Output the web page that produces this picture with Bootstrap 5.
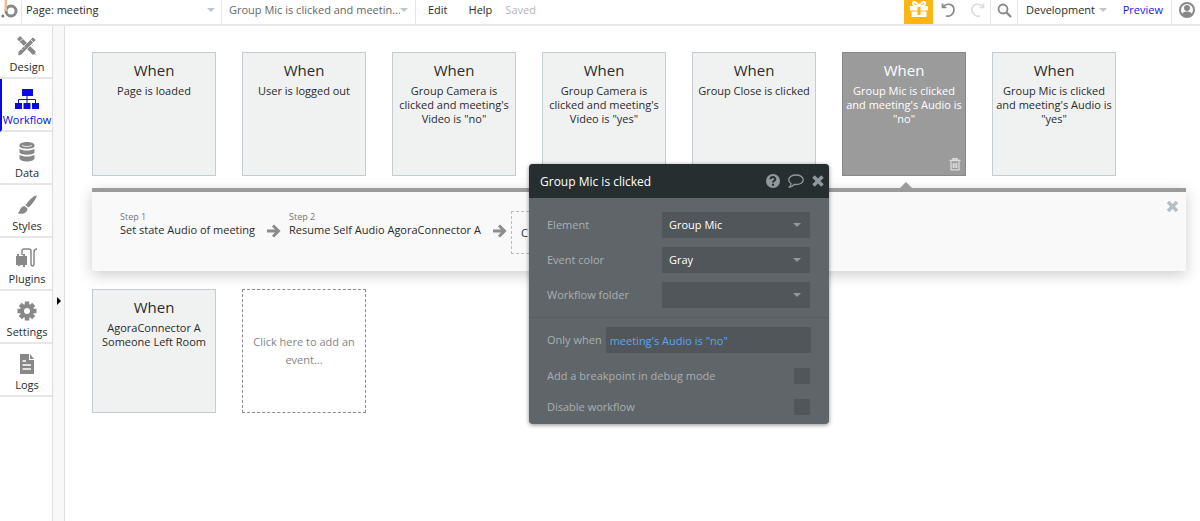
<!DOCTYPE html>
<html lang="en">
<head>
<meta charset="utf-8">
<meta name="viewport" content="width=device-width, initial-scale=1">
<title>Workflow editor</title>
<link href="https://cdn.jsdelivr.net/npm/bootstrap@5.3.0/dist/css/bootstrap.min.css" rel="stylesheet">
<style>
  body { font-family: "Open Sans", sans-serif; font-size: 11px; line-height: 14px; color: #2b2b2b; background: #fff; }
  a, button { color: inherit; text-decoration: none; }
  button { font: inherit; background: none; border: 0; padding: 0; }
  svg { display: block; flex: none; }

  /* top bar */
  .topbar { height: 26px; border-bottom: 2px solid #e8e8e8; padding-bottom: 4px; }
  .cell { height: 24px; padding-bottom: 4px; display: flex; align-items: center; border-right: 1px solid #e6e6e6; margin-bottom: -4px; }
  .pick { appearance: none; border: 0; background: transparent; width: 100%; font: inherit; color: inherit; padding: 0; outline: 0; }
  .caret { width: 0; height: 0; flex: none; border: 4px solid transparent; border-top-color: #bcc6cc; border-bottom: 0; }
  .home { width: 22px; }
  .page-cell { width: 200px; padding-left: 4px; padding-right: 6px; }
  .flow-cell { width: 194px; padding-left: 7px; padding-right: 7px; color: #666; }
  .history { width: 58px; padding-left: 8px; }
  .search { width: 27px; }
  .version { width: 154px; }
  .version .pick { width: 77px; }
  .menu { gap: 21px; padding-left: 12px; }
  .saved { color: #b5b5b5; margin-left: -8px; }
  .gift { width: 29px; background: #fdb515; color: #fff; border: 0; }
  .account { padding: 0 5px 0 7px; }
  .preview { color: #2020e8; }

  /* left navigation */
  .sidenav { width: 53px; border-right: 1px solid #dedede; }
  .sidenav a { height: 53px; border-bottom: 2px solid #e6e6e6; display: flex; flex-direction: column; align-items: center; justify-content: flex-end; gap: 4px; padding: 0 0 3px 2px; color: #2b2b2b; white-space: nowrap; }
  .sidenav svg { color: #888; }
  .sidenav a.current { color: #0a0ae0; border-left: 2px solid #0a0ae0; padding-left: 0; }
  .sidenav a.current svg { color: #0a0ae0; }
  .rail { width: 12px; background: #f8f8f8; border-right: 1px solid #dedede; padding-top: 268px; }

  /* canvas */
  .canvas { padding: 26px 14px 26px 27px; }
  .tiles { gap: 26px; }
  .tile { width: 124px; height: 124px; border: 1px solid #c3cdd1; background: #f0f2f2; text-align: center; padding: 7px 0 0; position: relative; color: #2b2b2b; }
  .tile h2 { font-size: 15px; line-height: 20px; font-weight: 400; margin: 0 0 4px; }
  .tile p { margin: 0; }
  .tile.active { background: #9b9b9b; border-color: #888; color: #fff; }
  .trash { position: absolute; right: 4px; bottom: 4px; color: #dcdcdc; }
  .tile.active::after { content: ""; position: absolute; left: 57px; top: 129px; border: 6px solid transparent; border-top: 0; border-bottom-color: #9b9b9b; }
  .add-tile { width: 124px; height: 124px; border: 1px dashed #8c8c8c; color: #858585; line-height: 18px; padding: 0 8px; }
  .flow { margin: 12px 0 18px; height: 83px; background: #f9f9f9; border-top: 4px solid #9b9b9b; box-shadow: 0 4px 14px rgba(0,0,0,.2); padding: 9px 8px 0 28px; }
  .flow small { display: block; font-size: 9px; line-height: 12px; color: #777; }
  .steps { padding-top: 10px; }
  .arrow { color: #8c8c8c; margin: 13px 8px 0 10px; }
  .arrow.last { margin-right: 4px; }
  .add-step { border: 1px dashed #b3bfc3; width: 150px; height: 43px; padding: 0 9px; text-align: left; }
  .close-flow { color: #b4c0c5; }

  /* property editor */
  .editor { position: absolute; left: 464px; top: 138px; width: 300px; border-radius: 4px; background: #5f6568; color: #a9b0b3; box-shadow: 0 1px 4px rgba(0,0,0,.45); overflow: hidden; }
  .editor header { height: 34px; background: #272e30; padding: 0 5px 0 11px; color: #8f999d; }
  .editor h1 { font-size: 12px; line-height: 16px; font-weight: 400; color: #fff; margin: 0; padding-top: 2px; }
  .fields { padding: 14px 19px 9px 18px; }
  .fields .line { height: 26px; margin-bottom: 9px; }
  .field { background: #505659; color: #fff; height: 26px; padding: 0 9px 0 7px; }
  .field .caret { border-top-color: #8f999d; }
  .field .pick { font-weight: 500; }
  .w-field { width: 148px; }
  .pick option { color: #222; }
  .rule { height: 1px; background: #565c5f; margin: 0 -19px 9px -18px; }
  .cond { background: #505659; border: 0; height: 26px; color: #58a6f5; padding: 0 4px; min-width: 0; font: inherit; margin-right: -1px; }
  .toggle { height: 16px; margin: 15px 0; }
  .toggle:last-child { margin-bottom: 0; }
  .tick { appearance: none; width: 16px; height: 16px; background: #505659; margin: 0; }
</style>
</head>
<body class="d-flex flex-column min-vh-100">

<nav class="topbar d-flex align-items-center">
  <a href="#" class="cell home" aria-label="Home">
    <svg width="21" height="20" viewBox="0 0 21 20" fill="none"><circle cx="2.800" cy="16" r="1.500" fill="#777"/><circle cx="11" cy="11" r="5" stroke="#888" stroke-width="3"/><path d="M5.800 0v11" stroke="#eabf98" stroke-width="2.500"/></svg>
  </a>
  <div class="cell page-cell">
    <select class="pick" aria-label="Page"><option>Page: meeting</option></select><span class="caret"></span>
  </div>
  <div class="cell flow-cell">
    <select class="pick" aria-label="Workflow"><option>Group Mic is clicked and meetin...</option></select><span class="caret"></span>
  </div>
  <div class="menu d-flex">
    <button type="button">Edit</button>
    <button type="button">Help</button>
    <span class="saved">Saved</span>
  </div>

  <button type="button" class="cell gift ms-auto justify-content-center" aria-label="Gift">
    <svg width="20" height="20" viewBox="0 0 20 20"><path fill="#fff" d="M1 6h18v4.500H1zM2.500 11.500h15V17h-15z"/><path d="M10 6C7 1 3 1 4 4c.5 2 4 2 6 2 2 0 5.500 0 6-2 1-3-3-3-6 2" stroke="#fff" stroke-width="2" fill="none"/><path fill="#fdb515" d="M8.500 7h3v8h-3z"/></svg>
  </button>
  <div class="cell history gap-3">
    <button type="button" aria-label="Undo"><svg width="14" height="16" viewBox="0 0 14 16" fill="none" stroke="#888" stroke-width="1.700"><path d="M1.500 1.500v4h4M2 5C5 1 13 1 13 8c0 4-4 7-8 6"/></svg></button>
    <button type="button" aria-label="Redo"><svg width="14" height="16" viewBox="0 0 14 16" fill="none" stroke="#ddd" stroke-width="1.700"><path d="M12.500 1.500v4h-4M12 5C9 1 1 1 1 8c0 4 4 7 8 6"/></svg></button>
  </div>
  <button type="button" class="cell search justify-content-center" aria-label="Search"><svg width="15" height="15" viewBox="0 0 15 15" fill="none" stroke="#888"><circle cx="6" cy="6" r="4.500" stroke-width="1.800"/><path d="M9.500 9.500 14 14" stroke-width="2.300"/></svg></button>
  <div class="cell version ps-2 pe-2">
    <select class="pick" aria-label="Version"><option>Development</option></select><span class="caret"></span>
    <a href="#" class="preview ms-3">Preview</a>
  </div>
  <button type="button" class="account" aria-label="Account"><svg width="16" height="16" viewBox="0 0 16 16"><circle cx="8" cy="8" r="7" fill="#fff" stroke="#888" stroke-width="2"/><circle cx="8" cy="6" r="3" fill="#888"/><path fill="#888" d="M3 12c1-2 3-2.500 5-2.500s4 .5 5 2.500c-3 3.500-7 3.500-10 0z"/></svg></button>
</nav>

<div class="d-flex flex-grow-1">
  <nav class="sidenav flex-shrink-0">
    <a href="#"><svg width="20" height="20" viewBox="0 0 20 20" fill="currentColor"><path d="M0 3l3-3 16 16-3 3zM15.500 14.500 20 20l-5.500-4z"/><path d="M1 20v-4L16 1l3 3L4 19z" stroke="#fff" stroke-width=".7"/><path d="M3 5.500 5.500 3M13.500 3.500l3 3M4 12.500l1.500 1.500M6.500 10 8 11.500" stroke="#fff" stroke-width=".9"/></svg>Design</a>
    <a href="#" class="current"><svg width="24" height="20" viewBox="0 0 24 20"><path fill="currentColor" d="M7 0h11v7H7zM0 14h7v6H0zM8.500 14h7v6h-7zM17 14h7v6h-7z"/><path d="M12 7v7M3.500 14v-3.500h17V14" fill="none" stroke="currentColor"/></svg>Workflow</a>
    <a href="#"><svg width="16" height="20" viewBox="0 0 16 20" fill="currentColor"><path d="M.5 3c0-4 15-4 15 0v1.500c-1 3-14 3-15 0z"/><path d="M.5 6.800c3 2.400 12 2.400 15 0v3.700c-1 3-14 3-15 0zM.5 12.800c3 2.400 12 2.400 15 0v3.700c-1 4-14 4-15 0z"/><path d="M3 3.500c2 1.300 8 1.300 10 0" fill="none" stroke="#fff" stroke-width=".8"/></svg>Data</a>
    <a href="#"><svg width="20" height="20" viewBox="0 0 20 20" fill="currentColor"><path d="M19.500.5c1 1-4 8.500-8 12L8.500 10C12 5 18-.5 19.500.5zM7.500 11l3 2.500c0 5-6 6.500-10 4.500 3-1 2-6.500 7-7z"/></svg>Styles</a>
    <a href="#"><svg width="22" height="20" viewBox="0 0 22 20"><path fill="currentColor" d="M0 8h1V6h2v2h4V6h2v2h2v9H9v2H7v-2H4v1H2v-1H0z"/><path d="M6 7V3q0-2 2-2h5q2 0 2 2v12q0 3 1.500 3t1.500-3V4q0-3 3-3" fill="none" stroke="currentColor" stroke-width="1.500"/></svg>Plugins</a>
    <a href="#"><svg width="20" height="20" viewBox="-10 -10 20 20"><g stroke="currentColor" stroke-width="4.500"><path d="M0-9.500v19M-9.500 0h19M-6.700-6.700 6.700 6.700M-6.700 6.700 6.700-6.700"/></g><circle r="5" fill="#fff" stroke="currentColor" stroke-width="4"/></svg>Settings</a>
    <a href="#"><svg width="16" height="20" viewBox="0 0 16 20"><path fill="currentColor" d="M1 0h9v6h5v14H1zM11 0l4 5h-4z"/><path d="M3.500 7H7M3.500 11H12M3.500 15H12" stroke="#fff" stroke-width="1.300"/></svg>Logs</a>
  </nav>
  <div class="rail flex-shrink-0"><button type="button" class="ps-1" aria-label="Expand"><svg width="4" height="8" viewBox="0 0 4 8"><path d="M0 0l4 4-4 4z"/></svg></button></div>

  <main class="canvas flex-grow-1 position-relative">
    <div class="tiles d-flex flex-wrap">
      <section class="tile"><h2>When</h2><p>Page is loaded</p></section>
      <section class="tile"><h2>When</h2><p>User is logged out</p></section>
      <section class="tile"><h2>When</h2><p>Group Camera is clicked and meeting's Video is "no"</p></section>
      <section class="tile"><h2>When</h2><p>Group Camera is clicked and meeting's Video is "yes"</p></section>
      <section class="tile"><h2>When</h2><p>Group Close is clicked</p></section>
      <section class="tile active"><h2>When</h2><p>Group Mic is clicked and meeting's Audio is "no"</p>
        <button type="button" class="trash" aria-label="Delete"><svg width="12" height="13" viewBox="0 0 12 13" fill="none" stroke="currentColor"><path d="M.5 2.500h11M4 2V.8h4V2" stroke-width="1.500"/><path d="M2 3.500v8.300h8V3.500M4.300 5v5M6 5v5M7.700 5v5" stroke-width="1.300"/></svg></button>
      </section>
      <section class="tile"><h2>When</h2><p>Group Mic is clicked and meeting's Audio is "yes"</p></section>
    </div>

    <div class="flow d-flex align-items-start">
      <div class="steps d-flex align-items-start me-auto">
        <div><small>Step 1</small>Set state Audio of meeting</div>
        <svg class="arrow" width="16" height="14" viewBox="0 0 16 14" fill="none" stroke="currentColor" stroke-width="3"><path d="M2 7h11M8 1.500l5.500 5.500L8 12.500"/></svg>
        <div><small>Step 2</small>Resume Self Audio AgoraConnector A</div>
        <svg class="arrow last" width="16" height="14" viewBox="0 0 16 14" fill="none" stroke="currentColor" stroke-width="3"><path d="M2 7h11M8 1.500l5.500 5.500L8 12.500"/></svg>
        <button type="button" class="add-step" aria-label="Add an action">C</button>
      </div>
      <button type="button" class="close-flow" aria-label="Close"><svg width="11" height="11" viewBox="0 0 11 11" stroke="currentColor" stroke-width="3.500"><path d="M1 1l9 9M10 1l-9 9"/></svg></button>
    </div>

    <div class="tiles d-flex flex-wrap">
      <section class="tile"><h2>When</h2><p class="px-2">AgoraConnector A Someone Left Room</p></section>
      <button type="button" class="add-tile">Click here to add an event...</button>
    </div>

    <form class="editor">
      <header class="d-flex align-items-center">
        <h1 class="me-auto">Group Mic is clicked</h1>
        <button type="button" class="me-2" aria-label="Help"><svg width="14" height="14" viewBox="0 0 14 14"><circle cx="7" cy="7" r="7" fill="currentColor"/><path d="M4.500 5.300C4.700 2.300 9.500 2.500 9.300 5.200 9.200 6.800 7 6.800 7 8.500M7 9.700v2" stroke="#272e30" stroke-width="2" fill="none"/></svg></button>
        <button type="button" class="me-2" aria-label="Comment"><svg width="16" height="14" viewBox="0 0 16 14" fill="none" stroke="currentColor" stroke-width="1.300"><path d="M8 1c4 0 7.300 2 7.300 4.800S12 10.500 8 10.500l-2-.1C5 12 3 13 1.500 13c1-1 1.500-2 1.500-3.500C1.500 8.500.7 7.300.7 5.800.7 3 4 1 8 1z"/></svg></button>
        <button type="button" aria-label="Close editor"><svg width="12" height="12" viewBox="0 0 12 12" stroke="currentColor" stroke-width="3.500"><path d="M1.500 1.500l9 9M10.500 1.500l-9 9"/></svg></button>
      </header>
      <div class="fields">
        <div class="line d-flex align-items-center justify-content-between"><label for="el">Element</label><div class="field w-field d-flex align-items-center"><select id="el" class="pick"><option>Group Mic</option></select><span class="caret"></span></div></div>
        <div class="line d-flex align-items-center justify-content-between"><label for="co">Event color</label><div class="field w-field d-flex align-items-center"><select id="co" class="pick"><option>Gray</option></select><span class="caret"></span></div></div>
        <div class="line d-flex align-items-center justify-content-between"><label for="fo">Workflow folder</label><div class="field w-field d-flex align-items-center"><select id="fo" class="pick"><option></option></select><span class="caret"></span></div></div>
        <div class="rule"></div>
        <div class="line d-flex align-items-center gap-1"><label for="cd" class="text-nowrap">Only when</label><input id="cd" class="cond flex-grow-1" type="text" value="meeting's Audio is &quot;no&quot;"></div>
        <div class="toggle d-flex align-items-center justify-content-between"><label for="bp">Add a breakpoint in debug mode</label><input id="bp" class="tick" type="checkbox"></div>
        <div class="toggle d-flex align-items-center justify-content-between"><label for="dw">Disable workflow</label><input id="dw" class="tick" type="checkbox"></div>
      </div>
    </form>
  </main>
</div>
<script src="https://cdn.jsdelivr.net/npm/bootstrap@5.3.0/dist/js/bootstrap.bundle.min.js"></script>
</body>
</html>
